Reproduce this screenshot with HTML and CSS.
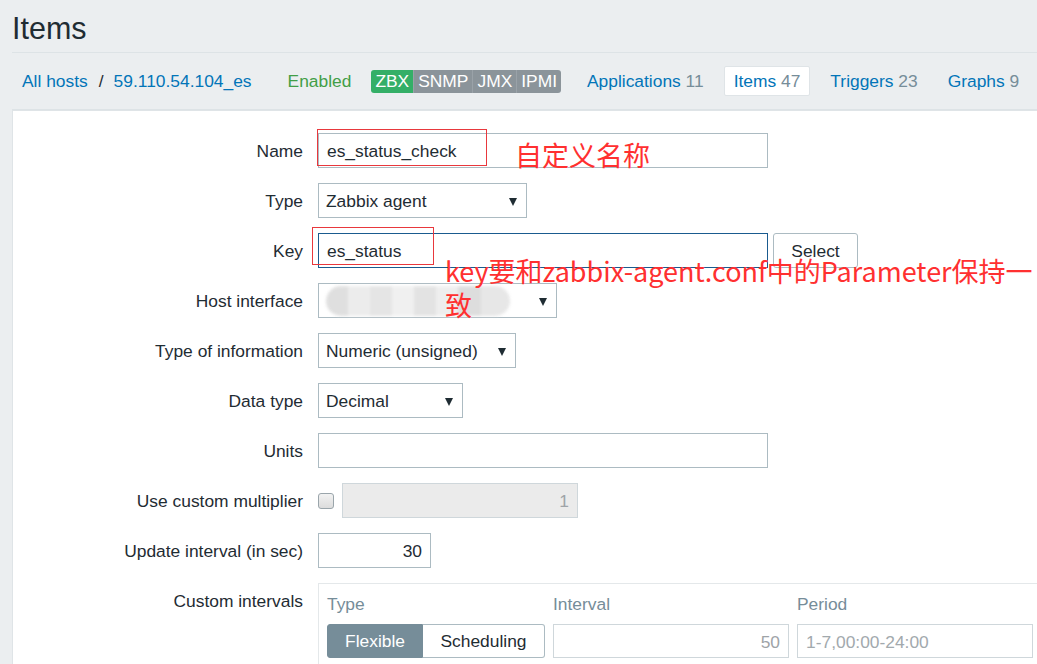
FILE: index.html
```html
<!DOCTYPE html>
<html lang="en">
<head>
    <meta charset="UTF-8">
    <meta name="viewport" content="width=device-width, initial-scale=1.0">
    <title>Items</title>
    <link rel="stylesheet" href="styles.css">
</head>
<body>
    <header class="page-header">
        <h1>Items</h1>
    </header>

    <nav class="host-nav">
        <a class="crumb" href="#">All hosts</a>
        <span class="crumb-sep">/</span>
        <a class="crumb" href="#">59.110.54.104_es</a>
        <span class="status-enabled">Enabled</span>
        <div class="avail">
            <span class="avail-tag zbx">ZBX</span>
            <span class="avail-tag">SNMP</span>
            <span class="avail-tag">JMX</span>
            <span class="avail-tag">IPMI</span>
        </div>
        <div class="tabs">
            <a class="tab" href="#">Applications <span class="count">11</span></a>
            <a class="tab active" href="#">Items <span class="count">47</span></a>
            <a class="tab" href="#">Triggers <span class="count">23</span></a>
            <a class="tab" href="#">Graphs <span class="count">9</span></a>
        </div>
    </nav>

    <main class="panel">
        <form class="item-form">
            <label class="form-label">Name</label>
            <div class="form-field"><input class="text-input w-wide" type="text" value="es_status_check"></div>

            <label class="form-label">Type</label>
            <div class="form-field">
                <div class="select w-type"><span>Zabbix agent</span><i class="arrow"></i></div>
            </div>

            <label class="form-label">Key</label>
            <div class="form-field">
                <input class="text-input w-wide focused" type="text" value="es_status">
                <button class="btn" type="button">Select</button>
            </div>

            <label class="form-label">Host interface</label>
            <div class="form-field">
                <div class="select w-iface"><span class="blurred"></span><i class="arrow"></i></div>
            </div>

            <label class="form-label">Type of information</label>
            <div class="form-field">
                <div class="select w-info"><span>Numeric (unsigned)</span><i class="arrow"></i></div>
            </div>

            <label class="form-label">Data type</label>
            <div class="form-field">
                <div class="select w-data"><span>Decimal</span><i class="arrow"></i></div>
            </div>

            <label class="form-label">Units</label>
            <div class="form-field"><input class="text-input w-wide" type="text" value=""></div>

            <label class="form-label">Use custom multiplier</label>
            <div class="form-field">
                <span class="checkbox"></span>
                <input class="text-input w-mult num disabled" type="text" value="1" readonly>
            </div>

            <label class="form-label">Update interval (in sec)</label>
            <div class="form-field">
                <input class="text-input w-upd num" type="text" value="30">
            </div>

            <label class="form-label">Custom intervals</label>
            <div class="form-field">
                <div class="intervals">
                    <div class="int-head">Type</div>
                    <div class="int-head">Interval</div>
                    <div class="int-head">Period</div>
                    <div class="segmented">
                        <span class="seg active">Flexible</span>
                        <span class="seg">Scheduling</span>
                    </div>
                    <input class="text-input num muted" type="text" value="50">
                    <input class="text-input muted" type="text" placeholder="1-7,00:00-24:00">
                </div>
            </div>
        </form>
    </main>

    <!-- red notes drawn over the screenshot -->
    <div class="mark mark-name"></div>
    <div class="mark mark-key"></div>
    <div class="note note-name">自定义名称</div>
    <div class="note note-key">key要和zabbix-agent.conf中的Parameter保持一<br>致</div>
</body>
</html>
```

FILE: styles.css
```css
html {
    overflow: hidden;
    height: 664px;
}
body {
    margin: 0;
    padding: 0 0 0 12px;
    background: #ebeef0;
    color: #1f2c33;
    font-family: 'Liberation Sans', Arial, sans-serif;
    font-size: 17.4px;
    overflow: hidden;
    height: 664px;
}
a {
    color: #0275b8;
    text-decoration: none;
}
.page-header {
    height: 52px;
    display: flex;
    align-items: center;
    border-bottom: 1px solid #dde3e6;
}
.page-header h1 {
    margin: 0;
    font-size: 30.5px;
    font-weight: normal;
    line-height: 36px;
    padding-top: 3px;
}
.host-nav {
    height: 56px;
    display: flex;
    align-items: center;
    padding-left: 10px;
    border-bottom: 1px solid #dde3e6;
    white-space: nowrap;
}
.host-nav > * {
    flex-shrink: 0;
}
.crumb-sep {
    margin: 0 10px 0 11px;
}
.status-enabled {
    color: #429e47;
    margin-left: 36px;
}
.avail {
    display: flex;
    margin-left: 20px;
    border-radius: 3px;
    overflow: hidden;
}
.avail-tag {
    background: #8b949a;
    color: #fff;
    line-height: 23px;
    padding: 0 4px;
    border-left: 1px solid #9aa2a8;
}
.avail-tag.zbx {
    background: #34af67;
    border-left: 0;
}
.tabs {
    display: flex;
    margin-left: 16px;
}
.tab {
    display: block;
    line-height: 28px;
    padding: 0 9px;
    margin-right: 10px;
    border: 1px solid transparent;
    border-radius: 2px;
    white-space: nowrap;
}
.tab.active {
    background: #fff;
    border-color: #dfe4e7;
}
.count {
    color: #768d99;
}
.panel {
    background: #fff;
    border-top: 1px solid #dfe4e7;
    border-left: 1px solid #dfe4e7;
    height: 560px;
    overflow: hidden;
}
.item-form {
    display: grid;
    grid-template-columns: 290px 1fr;
    column-gap: 15px;
    row-gap: 15px;
    padding-top: 22px;
}
.form-label {
    text-align: right;
    line-height: 37px;
    height: 35px;
    white-space: nowrap;
}
.form-field {
    display: flex;
    align-items: center;
    min-height: 35px;
}
.text-input {
    box-sizing: border-box;
    height: 35px;
    border: 1px solid #acbbc2;
    background: #fff;
    color: #1f2c33;
    font-family: inherit;
    font-size: 17.4px;
    padding: 2px 8px 0;
    margin: 0;
    outline: none;
}
.text-input.focused {
    border-color: #1a5b8f;
}
.text-input.num {
    text-align: right;
}
.text-input.disabled {
    background: #ebebeb;
    border-color: #cfd7db;
    color: #9ea3a7;
}
.text-input.muted {
    color: #9ea3a7;
    border-color: #cfd7db;
}
.text-input.muted::placeholder {
    color: #a2a9ad;
}
.w-wide { width: 450px; }
.w-mult { width: 236px; }
.w-upd { width: 113px; }
.w-type { width: 209px; }
.w-iface { width: 239px; }
.w-info { width: 198px; }
.w-data { width: 145px; }
.select {
    box-sizing: border-box;
    height: 35px;
    border: 1px solid #acbbc2;
    display: flex;
    align-items: center;
    justify-content: space-between;
    padding: 2px 9px 0 7px;
}
.arrow {
    width: 0;
    height: 0;
    border-left: 4.5px solid transparent;
    border-right: 4.5px solid transparent;
    border-top: 8px solid #1f2c33;
}
.blurred {
    width: 184px;
    height: 30px;
    margin-top: -2px;
    border-radius: 15px;
    background:
        linear-gradient(90deg, #dedede 0 12%, #ececec 12% 24%, #e4e4e4 24% 36%, #f0f0f0 36% 48%, #e2e2e2 48% 60%, #eeeeee 60% 72%, #dcdcdc 72% 84%, #e6e6e6 84% 100%);
    filter: blur(1.5px);
    opacity: 0.95;
}
.btn {
    box-sizing: border-box;
    height: 35px;
    width: 85px;
    margin-left: 5px;
    border: 1px solid #acbbc2;
    border-radius: 3px;
    background: #fff;
    color: #1f2c33;
    font-family: inherit;
    font-size: 17.4px;
    padding: 2px 0 0;
}
.checkbox {
    box-sizing: border-box;
    width: 16px;
    height: 16px;
    border: 1px solid #9aa5ab;
    border-radius: 3px;
    background: linear-gradient(#f2f2f2, #dcdcdc);
    margin-right: 8px;
}
.intervals {
    box-sizing: border-box;
    width: 740px;
    height: 90px;
    border: 1px solid #e4e8ea;
    border-right: 0;
    padding: 8px 0 0 8px;
    display: grid;
    grid-template-columns: 218px 236px 236px;
    column-gap: 8px;
    row-gap: 8px;
    align-content: start;
}
.int-head {
    color: #768d99;
    line-height: 24px;
}
.intervals .text-input {
    width: 100%;
    height: 34px;
}
.segmented {
    display: flex;
    height: 34px;
}
.seg {
    box-sizing: border-box;
    border: 1px solid #acbbc2;
    line-height: 33px;
    text-align: center;
}
.seg:first-child {
    width: 96px;
    border-radius: 3px 0 0 3px;
}
.seg:last-child {
    width: 122px;
    border-left: 0;
    border-radius: 0 3px 3px 0;
}
.seg.active {
    background: #768d99;
    border-color: #768d99;
    color: #fff;
}
.mark {
    position: absolute;
    border: 1px solid #e8383d;
}
.mark-name {
    left: 317px;
    top: 129px;
    width: 168px;
    height: 35px;
}
.mark-key {
    left: 312px;
    top: 227px;
    width: 120px;
    height: 36px;
}
.note {
    position: absolute;
    color: #ff3030;
    font-family: 'Noto Sans CJK SC', sans-serif;
    font-size: 27px;
    line-height: 34px;
    white-space: nowrap;
}
.note-name {
    left: 515px;
    top: 138px;
}
.note-key {
    left: 445px;
    top: 254px;
}
```
